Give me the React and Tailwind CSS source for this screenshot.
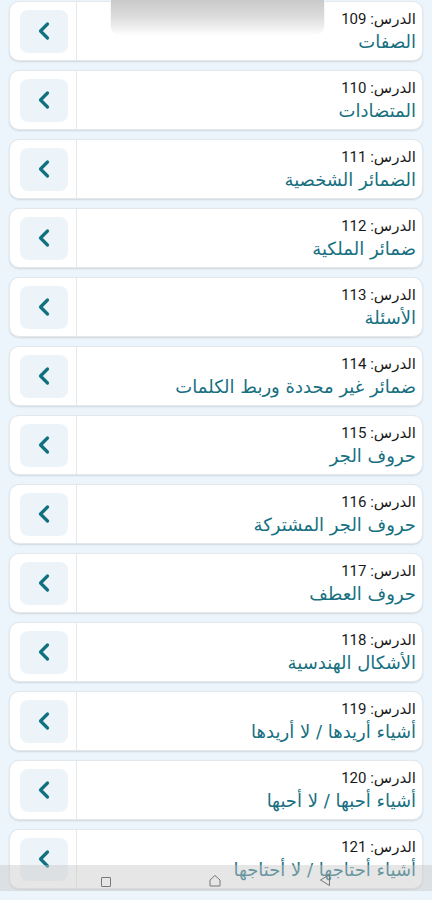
import React from "react";

const lessons = [
  [109, "الصفات"],
  [110, "المتضادات"],
  [111, "الضمائر الشخصية"],
  [112, "ضمائر الملكية"],
  [113, "الأسئلة"],
  [114, "ضمائر غير محددة وربط الكلمات"],
  [115, "حروف الجر"],
  [116, "حروف الجر المشتركة"],
  [117, "حروف العطف"],
  [118, "الأشكال الهندسية"],
  [119, "أشياء أريدها / لا أريدها"],
  [120, "أشياء أحبها / لا أحبها"],
  [121, "أشياء أحتاجها / لا أحتاجها"],
];

function Chevron() {
  return (
    <svg width="14" height="20" viewBox="0 0 14 20" fill="none">
      <path d="M10.5 3 L3.5 10 L10.5 17" stroke="#11707f" strokeWidth="3.2" strokeLinecap="round" strokeLinejoin="round" />
    </svg>
  );
}

function Card({ n, title }) {
  return (
    <div className="flex h-[60px] shrink-0 rounded-[10px] bg-white border border-[#e3e8ec] shadow-[0_1px_2px_rgba(0,0,0,0.12)] overflow-hidden">
      <div className="w-[67px] shrink-0 flex items-center justify-center border-r border-[#e4e8eb] pl-[2px]">
        <div className="w-[48px] h-[43px] rounded-[8px] bg-[#edf4f9] flex items-center justify-center">
          <Chevron />
        </div>
      </div>
      <div dir="rtl" className="flex-1 flex flex-col justify-center pr-[6px] pb-[1px] text-right whitespace-nowrap">
        <div className="text-[15px] leading-[22px] text-[#1a1a1a] font-['Roboto','DejaVu_Sans',sans-serif]">
          الدرس: {n}
        </div>
        <div className="text-[18px] leading-[24px] text-[#17707f] font-['DejaVu_Sans',sans-serif]">
          {title}
        </div>
      </div>
    </div>
  );
}

export default function App() {
  return (
    <div className="relative w-[432px] h-[900px] overflow-hidden bg-[#ecf5fb]">
      <div className="flex flex-col gap-[9px] pt-px pl-[9px] pr-[9px]">
        {lessons.map(([n, t]) => (
          <Card key={n} n={n} title={t} />
        ))}
      </div>
      {/* top overlay */}
      <div className="absolute left-[110px] top-0 w-[215px] h-[36px] rounded-b-[10px] bg-gradient-to-b from-[#c9c9c9] via-[#dedede] to-[rgba(255,255,255,0)] border-x border-white/80" />
      {/* bottom nav bar */}
      <div className="absolute left-0 right-0 top-[865px] h-[26px] bg-[rgba(200,200,200,0.45)]">
        <div className="absolute left-[101px] top-[12px] w-[10px] h-[10px] border border-[#777] rounded-[1px]" />
        <svg className="absolute left-[209px] top-[9px]" width="12" height="13" viewBox="0 0 12 13" fill="none">
          <path d="M1 6 L6 1.5 L11 6 V12 H1 Z" stroke="#777" strokeWidth="1" strokeLinejoin="round" />
        </svg>
        <svg className="absolute left-[319px] top-[8px]" width="12" height="14" viewBox="0 0 12 14" fill="none">
          <path d="M10.5 1.5 L1.5 7 L10.5 12.5 Z" stroke="#777" strokeWidth="1" strokeLinejoin="round" />
        </svg>
      </div>
    </div>
  );
}
